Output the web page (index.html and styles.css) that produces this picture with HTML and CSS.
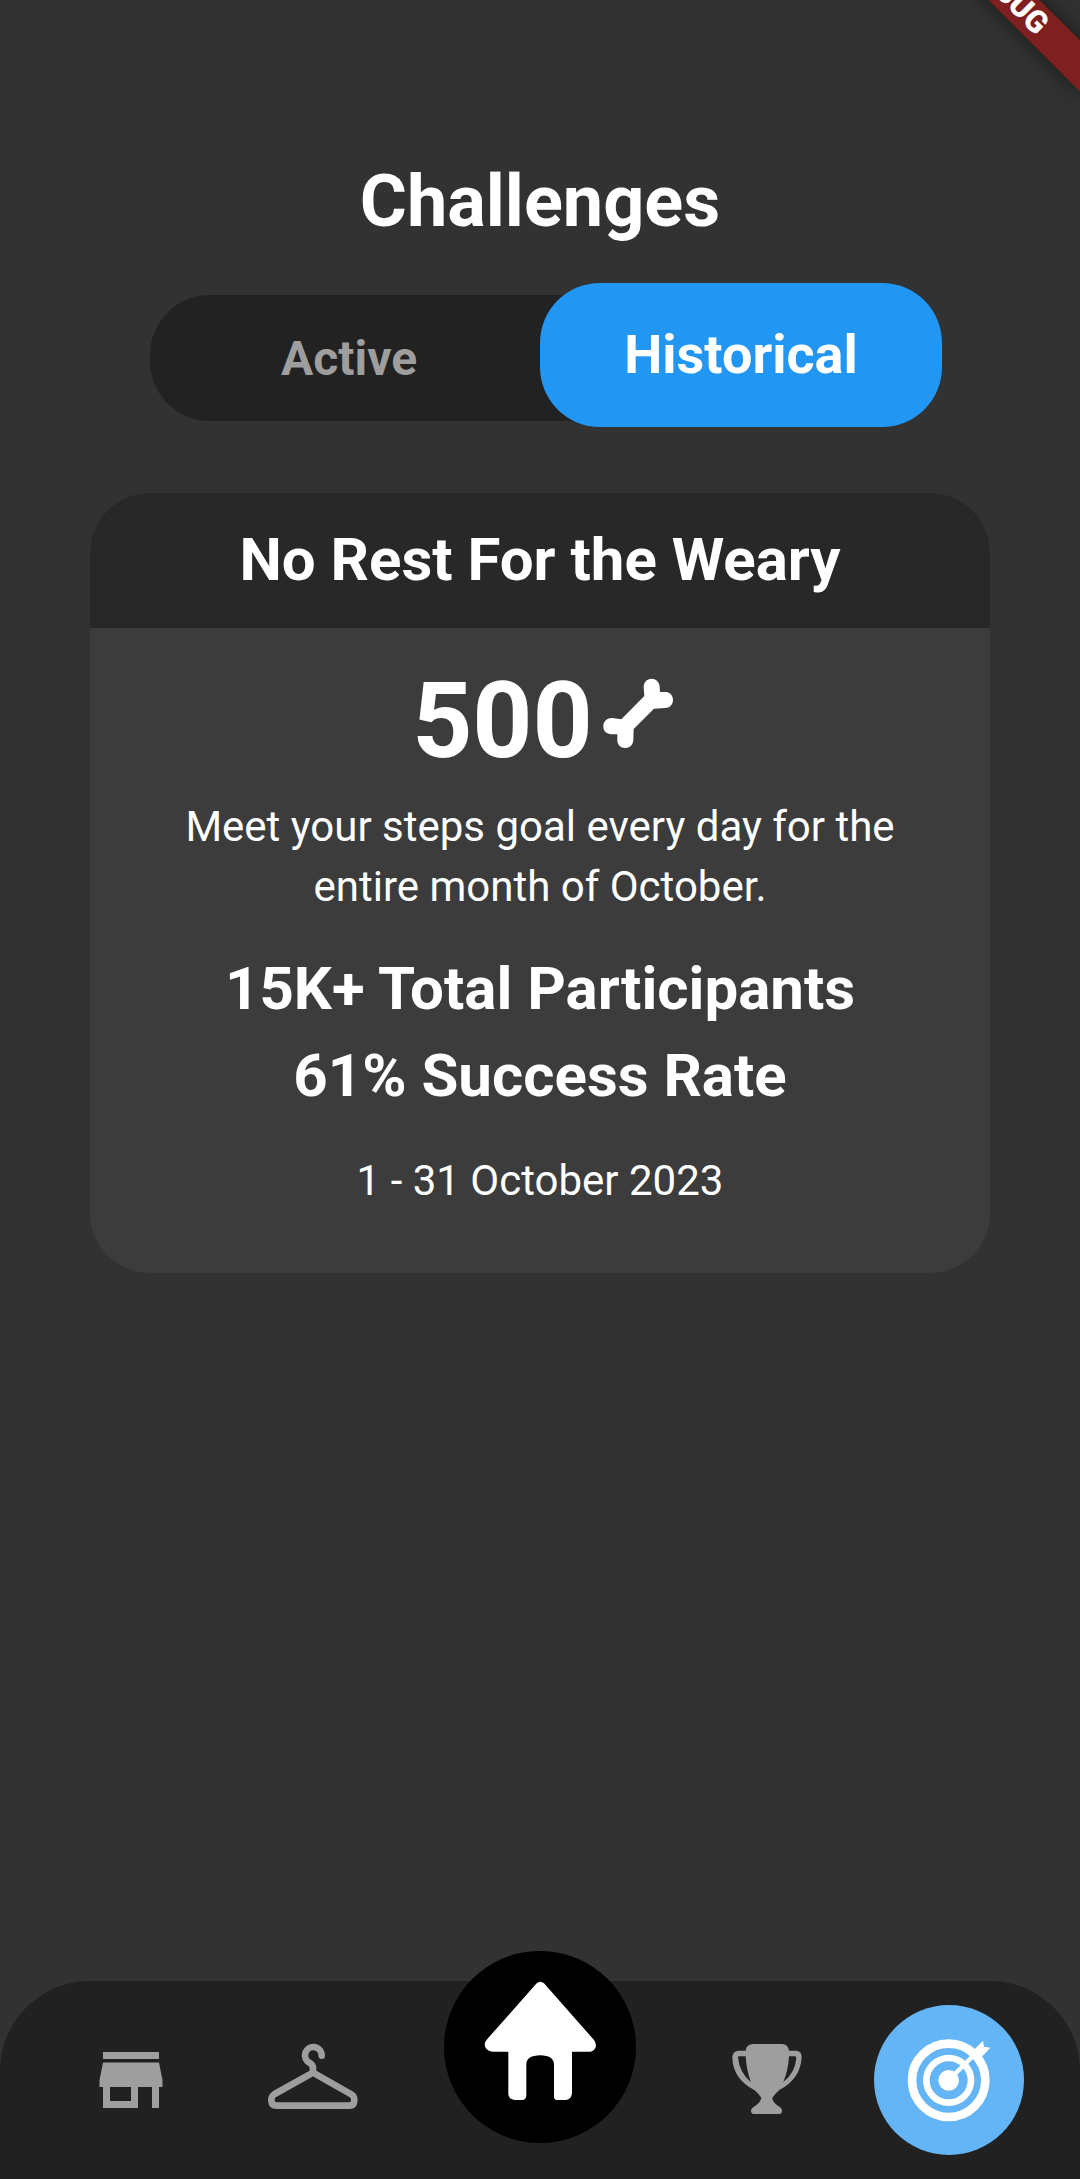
FILE: index.html
```html
<!DOCTYPE html>
<html lang="en">
<head>
<meta charset="utf-8">
<meta name="viewport" content="width=device-width, initial-scale=1">
<title>Challenges</title>
<link rel="stylesheet" href="styles.css">
</head>
<body>
<div class="banner-clip"><div class="banner">DEBUG</div></div>
<main class="content">
  <h1 class="title">Challenges</h1>
  <div class="tabs" role="tablist">
    <button class="tab" type="button" role="tab" aria-selected="false">Active</button>
    <button class="tab tab-selected" type="button" role="tab" aria-selected="true">Historical</button>
  </div>
  <article class="card">
    <h2 class="card-title">No Rest For the Weary</h2>
    <div class="card-body">
      <div class="reward">
        <span>500</span>
        <svg class="bone" viewBox="8 0 300 300" role="img" aria-label="bones">
          <path d="M184 56C199 56 207 68 208 80L209 96H226C240 97 248 107 248 120C248 134 238 144 224 144L191 146L130 207L129 240C128 256 118 264 105 264C90 264 81 254 81 240V223H63C48 222 39 213 39 199C39 184 50 174 66 174L93 178L162 108L160 82C160 67 169 56 184 56Z"/>
        </svg>
      </div>
      <p class="text">Meet your steps goal every day for the entire month of October.</p>
      <div class="stats">
        <p class="stat">15K+ Total Participants</p>
        <p class="stat">61% Success Rate</p>
      </div>
      <p class="text">1 - 31 October 2023</p>
    </div>
  </article>
</main>
<nav class="nav" aria-label="Main">
  <a class="nav-item" href="#store" aria-label="Store">
    <svg class="icon-store" viewBox="0 0 24 24"><path d="M20 4H4v2h16V4zm1 10v-2l-1-5H4l-1 5v2h1v6h10v-6h4v6h2v-6h1zm-9 4H6v-4h6v4z"/></svg>
  </a>
  <a class="nav-item" href="#wardrobe" aria-label="Wardrobe">
    <svg class="icon-hanger" viewBox="0 0 300 240"><path d="M176 47A25 25 0 1 0 141 69Q150 75 150 85V98M150 98L35 162Q25 168 25 180Q25 197 41 197H259Q274 197 274 180Q274 168 265 163Z"/></svg>
  </a>
  <a class="nav-item nav-home" href="#home" aria-label="Home">
    <svg class="icon-home" viewBox="42 33 576 576"><path d="M320 130Q331 121 342 130L492 300Q501 311 496 324Q491 335 478 335H426V460Q424 478 408 480H380Q372 479 372 470V372Q370 347 331 346Q290 347 289 372V466Q289 480 276 480H254Q236 478 235 462V335H188Q172 334 166 322Q161 309 170 299Z"/></svg>
  </a>
  <a class="nav-item" href="#trophies" aria-label="Trophies">
    <svg class="icon-trophy" viewBox="81 60 240 240"><path fill-rule="evenodd" d="M157 72H247Q264 73 267 92H290Q305 94 305 110Q303 175 238 210Q228 218 217 233Q218 248 235 258Q246 264 246 273Q246 282 236 282H164Q153 282 153 272Q153 264 166 257Q182 246 184 233Q174 220 164 211Q98 177 97 112Q98 94 114 92H137Q139 74 157 72ZM114 112Q114 109 118 109H137Q139 150 153 187Q118 158 114 112ZM267 109H285Q289 110 289 114Q286 158 250 186Q265 150 267 109Z"/></svg>
  </a>
  <a class="nav-item nav-current" href="#challenges" aria-label="Challenges" aria-current="page">
    <svg class="icon-target" viewBox="116 120 300 300">
      <circle class="ring-outer" cx="265" cy="271" r="110"/>
      <circle class="ring-inner" cx="265" cy="271" r="67"/>
      <circle class="dot" cx="265" cy="271" r="31"/>
      <path class="shaft" d="M265 271L350 186"/>
      <path class="dot" d="M338 182L368 152L371 170L390 173L361 204L342 200Z"/>
    </svg>
  </a>
</nav>
</body>
</html>
```
FILE: styles.css
```css
* { box-sizing: border-box; margin: 0; }

body {
  position: relative;
  display: flex;
  flex-direction: column;
  min-height: 100vh;
  background: #323232;
  color: #fff;
  font-family: Roboto, "Liberation Sans", sans-serif;
}

/* Corner ribbon, partly beyond the top edge of the window */
.banner-clip {
  position: absolute;
  top: 0;
  right: 0;
  width: 240px;
  height: 240px;
  overflow: hidden;
  pointer-events: none;
}

.banner {
  position: absolute;
  top: -24px;
  right: -48px;
  width: 240px;
  height: 36px;
  background: #7f1f1f;
  box-shadow: 0 0 24px rgba(0, 0, 0, 0.5);
  font-size: 31px;
  font-weight: 900;
  line-height: 36px;
  text-align: center;
  transform: rotate(45deg);
}

.content {
  flex: 1;
  padding: 160px 90px 90px;
}

.title {
  font-size: 72px;
  line-height: 84px;
  text-align: center;
}

.tabs {
  display: grid;
  grid-template-columns: 1fr 1fr;
  align-items: center;
  height: 126px;
  margin: 51px 60px 0;
  border-radius: 60px;
  background: #222;
}

.tab {
  padding: 2px 0 0 8px;
  border: 0;
  background: none;
  color: #9e9e9e;
  font: bold 48px/56px Roboto, "Liberation Sans", sans-serif;
}

.tab-selected {
  height: 144px;
  margin: -12px -12px -6px 0;
  padding: 0;
  border-radius: 60px;
  background: #2196f3;
  color: #fff;
  font-size: 54px;
}

.card {
  margin-top: 72px;
  overflow: hidden;
  border-radius: 60px;
  background: #3c3c3c;
  text-align: center;
}

.card-title {
  padding: 32px 60px 33px;
  background: #282828;
  font-size: 60px;
  line-height: 70px;
}

.card-body { padding: 32px 60px 62px; }

.reward {
  display: flex;
  justify-content: center;
  font-size: 105px;
  font-weight: bold;
  line-height: 124px;
}

.bone {
  width: 100px;
  height: 100px;
  margin-right: -25px;
  fill: #fff;
}

.text {
  font-size: 42px;
  line-height: 60px;
}

.reward + .text { margin-top: 13px; }

.stats {
  display: flex;
  flex-direction: column;
  gap: 17px;
  margin: 37px 0 40px;
}

.stat {
  font-size: 60px;
  font-weight: bold;
  line-height: 70px;
}

.nav {
  display: flex;
  align-items: center;
  justify-content: space-between;
  height: 198px;
  padding: 0 56px;
  border-radius: 90px 90px 0 0;
  background: #212121;
}

.nav-item {
  display: flex;
  align-items: center;
  justify-content: center;
  width: 150px;
  height: 150px;
  border-radius: 50%;
  fill: #9e9e9e;
}

.nav-home {
  width: 192px;
  height: 192px;
  margin: -30px 24px 36px;
  background: #000;
  fill: #fff;
}

.nav-current { background: #64b5f6; fill: #fff; }

.icon-store { width: 84px; height: 84px; }
.icon-home { width: 192px; height: 192px; }
.icon-trophy { width: 80px; height: 80px; }
.icon-target { width: 100px; height: 100px; }

.icon-hanger {
  width: 100px;
  height: 80px;
  fill: none;
  stroke: #9e9e9e;
  stroke-width: 20;
  stroke-linecap: round;
  stroke-linejoin: round;
}

.ring-outer { fill: none; stroke: #fff; stroke-width: 26; }
.ring-inner { fill: none; stroke: #fff; stroke-width: 20; }
.shaft { stroke: #fff; stroke-width: 13; }
.dot { fill: #fff; }
```
